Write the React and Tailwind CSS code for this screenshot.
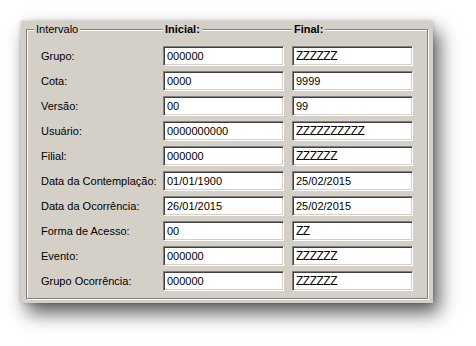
const rows = [
  { label: 'Grupo:', ini: '000000', fim: 'ZZZZZZ' },
  { label: 'Cota:', ini: '0000', fim: '9999' },
  { label: 'Versão:', ini: '00', fim: '99' },
  { label: 'Usuário:', ini: '0000000000', fim: 'ZZZZZZZZZZ' },
  { label: 'Filial:', ini: '000000', fim: 'ZZZZZZ' },
  { label: 'Data da Contemplação:', ini: '01/01/1900', fim: '25/02/2015' },
  { label: 'Data da Ocorrência:', ini: '26/01/2015', fim: '25/02/2015' },
  { label: 'Forma de Acesso:', ini: '00', fim: 'ZZ' },
  { label: 'Evento:', ini: '000000', fim: 'ZZZZZZ' },
  { label: 'Grupo Ocorrência:', ini: '000000', fim: 'ZZZZZZ' },
]

// os "ZZZ" do sistema antigo aparecem colados, tipo hachura
const Field = ({ value }) => {
  const isZ = /^Z+$/.test(value)
  return (
    <div className="w-[121px] h-[20px] bg-white border border-t-[#808080] border-l-[#808080] border-r-white border-b-white shadow-[inset_1px_1px_0_#404040,inset_-1px_-1px_0_#d4d0c8] flex items-center pl-[3px] text-black">
      <span className={isZ ? 'leading-none text-[12px] tracking-[-0.5px]' : 'leading-none'}>{value}</span>
    </div>
  )
}

const App = () => {
  return (
    <div className="w-[476px] h-[346px] bg-white pt-[21px] pl-[21px] font-['Liberation_Sans',Arial,sans-serif] text-[11px]">
      <div className="w-[412px] h-[282px] bg-[#d4d0c8] pt-[8px] pl-[5px] shadow-[6px_10px_18px_rgba(0,0,0,0.65),0_0_4px_rgba(0,0,0,0.2)]">
        <div className="relative w-[402px] h-[270px] border border-[#808080] shadow-[inset_1px_1px_0_#fff,1px_1px_0_#fff] pt-[16px] pl-[14px]">
          <span className="absolute top-[-7px] left-[7px] bg-[#d4d0c8] px-[2px] leading-[13px] text-black">Intervalo</span>
          <span className="absolute top-[-7px] left-[136px] bg-[#d4d0c8] px-[2px] leading-[13px] font-bold text-black">Inicial:</span>
          <span className="absolute top-[-7px] left-[265px] bg-[#d4d0c8] px-[2px] leading-[13px] font-bold text-black">Final:</span>
          <div className="flex flex-col gap-[5px]">
            {rows.map((r) => (
              <div key={r.label} className="flex items-center h-[20px]">
                <span className="w-[122px] text-black">{r.label}</span>
                <Field value={r.ini} />
                <div className="w-[8px]" />
                <Field value={r.fim} />
              </div>
            ))}
          </div>
        </div>
      </div>
    </div>
  )
}

export default App
